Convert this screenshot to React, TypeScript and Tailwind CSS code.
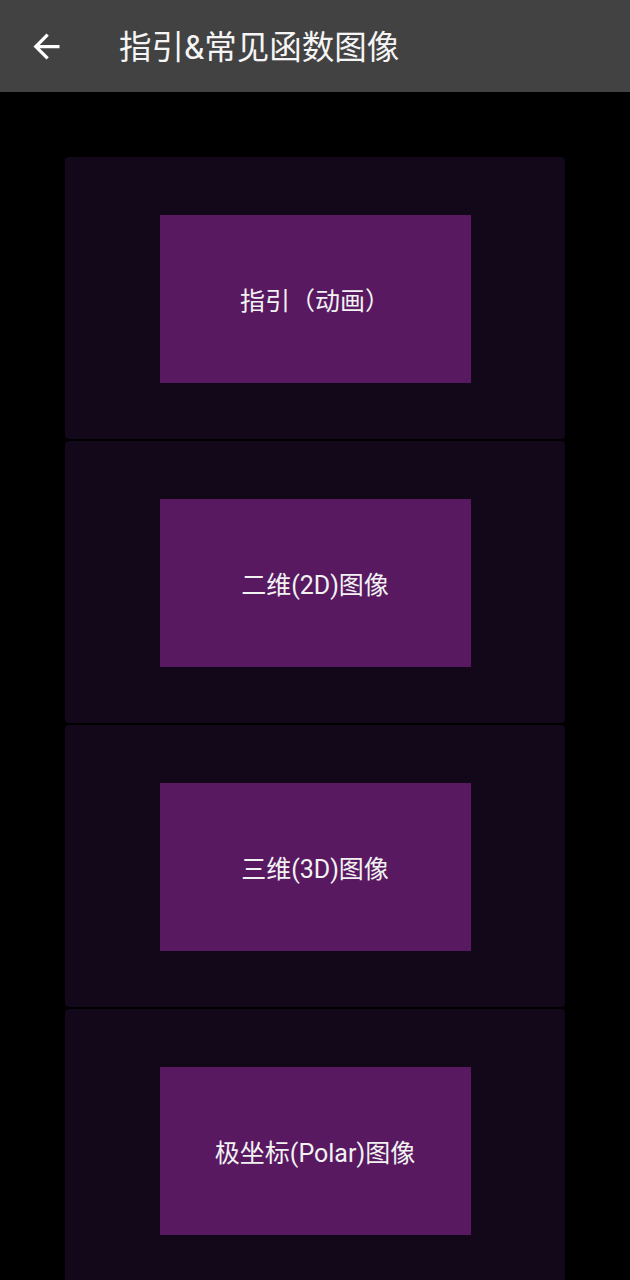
const items = ['指引（动画）', '二维(2D)图像', '三维(3D)图像', '极坐标(Polar)图像'];

function BackArrow() {
  return (
    <svg viewBox="0 0 24 24" className="w-[39px] h-[39px]" fill="#ffffff">
      <path d="M20 11H7.83l5.59-5.59L12 4l-8 8 8 8 1.41-1.41L7.83 13H20v-2z" />
    </svg>
  );
}

export default function App() {
  return (
    <div
      className="w-[630px] h-[1280px] bg-black overflow-hidden"
      style={{ fontFamily: "Roboto, 'Noto Sans CJK SC', sans-serif" }}
    >
      {/* Toolbar */}
      <div className="h-[92px] bg-[#424242] flex items-center">
        <div className="ml-[27px] w-[39px] flex items-center justify-center">
          <BackArrow />
        </div>
        <div className="ml-[53px] mt-[4px] text-[32.5px] font-normal text-[#f5f5f5] leading-none">
          指引&amp;常见函数图像
        </div>
      </div>

      {/* Cards */}
      <div className="pt-[65px] flex flex-col items-center gap-[2px]">
        {items.map((label) => (
          <div
            key={label}
            className="w-[500px] h-[282px] shrink-0 bg-[#13071a] rounded-[4px] shadow-[0_1px_1px_rgba(0,0,0,0.2)] flex justify-center pt-[58px]"
          >
            <button className="w-[311px] h-[168px] bg-[#581961] text-[#f2f2f2] text-[25px] pt-[5px]">
              {label}
            </button>
          </div>
        ))}
      </div>
    </div>
  );
}
